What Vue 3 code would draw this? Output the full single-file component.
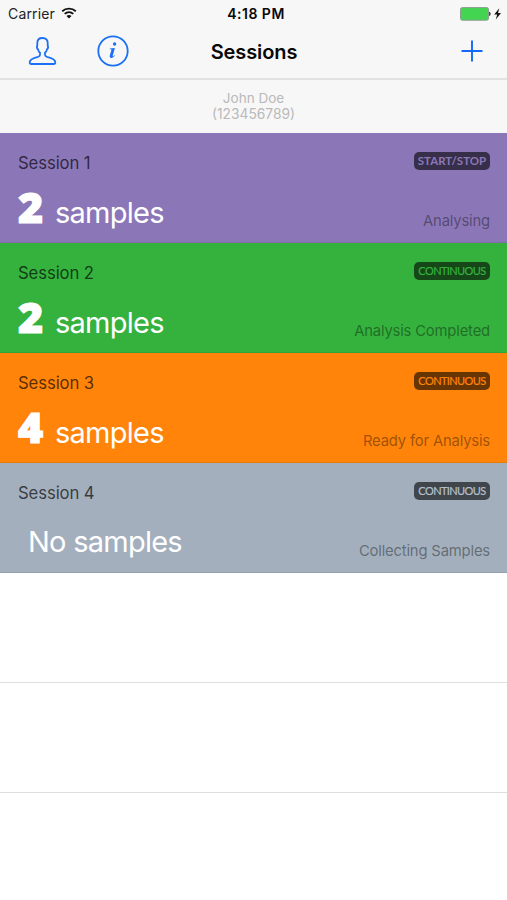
<script setup>
const sessions = [
  { name: 'Session 1', count: 2, mode: 'START/STOP', status: 'Analysing', theme: 'purple' },
  { name: 'Session 2', count: 2, mode: 'CONTINUOUS', status: 'Analysis Completed', theme: 'green' },
  { name: 'Session 3', count: 4, mode: 'CONTINUOUS', status: 'Ready for Analysis', theme: 'orange' },
  { name: 'Session 4', count: 0, mode: 'CONTINUOUS', status: 'Collecting Samples', theme: 'gray' },
]
</script>

<template>
  <div class="screen">
    <header class="top">
      <div class="statusbar">
        <div class="carrier">
          <span>Carrier</span>
          <svg class="wifi" width="16" height="12" viewBox="0 0 16 12">
            <path d="M1.2 4.2C5 .8 11 .8 14.8 4.2M3.7 6.900c2.500-2.200 6.100-2.200 8.600 0" fill="none" stroke="#111" stroke-width="1.9" />
            <path d="M5.5 8.900c1.500-1.300 3.500-1.300 5 0L8 11.600z" fill="#111" />
          </svg>
        </div>
        <span class="clock">4:18 PM</span>
        <svg class="battery" width="43" height="14" viewBox="0 0 43 14">
          <rect x=".5" y=".6" width="28" height="12.6" rx="1.8" fill="#43d551" stroke="#8f9b91" />
          <path d="M29.2 4.8c1.8.2 1.8 4 0 4.2z" fill="#222" />
          <path d="M39.3 1.2 34.2 7.5h3L35.8 12.4 41 6.1h-3z" fill="#111" />
        </svg>
      </div>
      <nav class="navbar">
        <div class="actions">
          <svg width="30" height="30" viewBox="0 0 30 30" class="line-icon">
            <path d="M15.500 2c-3.700 0-5.200 2-5.200 4.900v2.300c-.5 1.300-.2 3.500.8 4.300.2 1.500.8 2.500 1.900 3.300v2.200c0 1-.6 1.400-2 1.800-5.300 1.300-8.300 2.700-8.300 5.400 0 1.300.6 1.800 1.600 1.800h22.400c1 0 1.600-.5 1.600-1.800 0-2.700-3-4.100-8.300-5.400-1.400-.4-2-.8-2-1.800v-2.200c1.100-.8 1.700-1.800 1.900-3.300 1-.8 1.300-3 .8-4.300v-2.300c0-2.900-1.500-4.900-5.200-4.900z" />
          </svg>
          <svg width="32" height="32" viewBox="0 0 32 32" class="line-icon">
            <circle cx="16" cy="16" r="14.700" />
            <circle cx="17.600" cy="9" r="1.700" class="solid" />
            <path class="solid" d="M12.800 13.600 17.900 13l-2.200 7.800c-.2.900.5.700 1.700-.9l.5.400c-1.400 2.100-2.500 2.700-3.700 2.600-1.400-.1-1.700-1.200-1.400-2.400l1.600-5.500c.2-.8-.4-.8-1.700-.8z" />
          </svg>
        </div>
        <h1>Sessions</h1>
        <svg class="plus" width="22" height="22" viewBox="0 0 22 22">
          <path d="M11 .5v21M.5 11h21" fill="none" stroke="#1268f8" stroke-width="1.900" />
        </svg>
      </nav>
    </header>
    <section class="patient">
      <div class="person">John Doe</div>
      <div>(123456789)</div>
    </section>
    <main>
      <article v-for="s in sessions" :key="s.name" class="row" :class="s.theme">
        <div class="line head">
          <span class="name">{{ s.name }}</span>
          <span class="badge" :class="{ heavy: s.mode === 'START/STOP' }">{{ s.mode }}</span>
        </div>
        <div class="line foot">
          <div class="samples" :class="{ none: !s.count }"><b v-if="s.count">{{ s.count }}</b><span>{{ s.count ? 'samples' : 'No samples' }}</span></div>
          <span class="status">{{ s.status }}</span>
        </div>
      </article>
      <div class="blank"></div>
      <div class="blank"></div>
    </main>
  </div>
</template>

<style>
body { background: #fff; }
</style>

<style scoped>
.screen {
  width: 507px;
  height: 900px;
  overflow: hidden;
  background: #fff;
  font-family: Inter, "Liberation Sans", sans-serif;
  color: #080808;
}
.top {
  box-sizing: border-box;
  height: 80px;
  background: #f7f7f7;
  border-bottom: 2px solid #e2e2e2;
}
.statusbar, .navbar {
  display: grid;
  grid-template-columns: 1fr auto 1fr;
  align-items: center;
}
.statusbar { height: 27px; padding: 0 4px 0 8px; }
.carrier { display: flex; align-items: center; gap: 6px; font-size: 14px; color: #222; letter-spacing: 0.15px; }
.wifi { margin-bottom: 2px; }
.clock { margin-left: 1px; font-size: 14px; font-weight: 600; letter-spacing: 0.500px; }
.battery { justify-self: end; }
.navbar { height: 49px; padding: 0 24px 0 27px; }
.actions { display: flex; align-items: center; gap: 40px; margin-bottom: 2px; }
.line-icon { fill: none; stroke: #1b70f5; stroke-width: 1.800; }
.solid { fill: #1b70f5; stroke: none; }
h1 { margin: 1px 2px 0 0; font-size: 20px; font-weight: 600; line-height: 24px; letter-spacing: -0.100px; }
.plus { justify-self: end; margin-bottom: 1px; }
.patient {
  box-sizing: border-box;
  height: 53px;
  padding-top: 10px;
  background: #f7f7f7;
  color: #b9b9b9;
  text-align: center;
  font-size: 13.800px;
  line-height: 16px;
}
.person { font-size: 13.500px; }
.row {
  box-sizing: border-box;
  height: 110px;
  padding: 17px 17px 0 18px;
  border-bottom: 1px solid rgba(0, 0, 0, 0.08);
}
.purple { background: #8b77b8; }
.green { background: #35b13e; }
.orange { background: #ff8409; }
.gray { background: #a3afbd; }
.line { display: flex; justify-content: space-between; }
.head { height: 24px; align-items: flex-start; }
.name { font-size: 16.700px; line-height: 26px; letter-spacing: -0.100px; color: rgba(0, 0, 0, 0.68); }
.badge {
  width: 76px;
  height: 18px;
  margin-top: 2px;
  border-radius: 5px;
  background: rgba(0, 0, 0, 0.6);
  font-family: Lato, sans-serif;
  font-size: 11px;
  line-height: 17px;
  letter-spacing: -0.600px;
  text-align: center;
  -webkit-text-stroke: 0.200px currentColor;
}
.heavy { font-size: 11.500px; font-weight: 700; letter-spacing: 0; -webkit-text-stroke: 0; }
.purple .badge { color: #8b77b8; }
.green .badge { color: #35b13e; }
.orange .badge { color: #ff8409; }
.gray .badge { color: #b5c0cc; }
.foot { height: 57px; }
.samples { display: flex; align-items: baseline; height: 66px; color: #fff; }
.samples b { width: 37px; font-family: "Open Sans", sans-serif; font-weight: 800; font-size: 43px; line-height: 65px; -webkit-text-stroke: 1.200px currentColor; }
.samples span { font-size: 29px; line-height: 65px; letter-spacing: -0.750px; }
.samples.none { padding: 5px 0 0 10px; }
.status { align-self: flex-end; font-size: 14.800px; line-height: 20px; letter-spacing: -0.170px; color: rgba(0, 0, 0, 0.4); }
.blank { box-sizing: border-box; height: 110px; border-bottom: 1px solid #dedede; }
</style>
